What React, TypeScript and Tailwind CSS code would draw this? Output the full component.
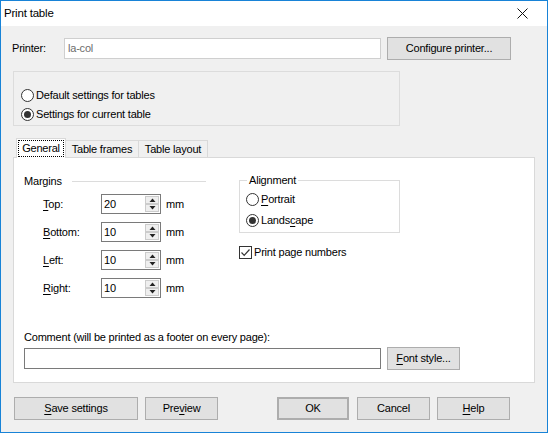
import React from 'react';

function Radio({ checked }: { checked?: boolean }) {
  return (
    <span className="w-[13px] h-[13px] rounded-full border border-[#333] bg-white flex items-center justify-center shrink-0">
      {checked && <span className="w-[7px] h-[7px] rounded-full bg-[#333]" />}
    </span>
  );
}

function Checkbox() {
  return (
    <span className="w-[13px] h-[13px] border border-[#333] bg-white flex items-center justify-center shrink-0">
      <svg width="11" height="11" viewBox="0 0 11 11" fill="none">
        <path d="M1.5 5.5 L4.2 8.3 L9.5 2.5" stroke="#333" strokeWidth="1.2" />
      </svg>
    </span>
  );
}

function Arrow({ up }: { up?: boolean }) {
  return (
    <span className="flex-1 bg-[#efefef] border border-[#cccccc] flex items-center justify-center">
      <svg width="7" height="4" viewBox="0 0 7 4">
        {up ? <path d="M0.5 4 L3.5 0.5 L6.5 4 Z" fill="#222" /> : <path d="M0.5 0 L6.5 0 L3.5 3.5 Z" fill="#222" />}
      </svg>
    </span>
  );
}

function Spin({ value }: { value: string }) {
  return (
    <div className="w-[60px] h-[20px] border border-[#7a7a7a] bg-white flex items-center">
      <span className="flex-1 pl-[2px]">{value}</span>
      <div className="flex flex-col w-[15px] h-full py-px pr-px">
        <Arrow up />
        <Arrow />
      </div>
    </div>
  );
}

function Button({ children, className = '' }: { children: React.ReactNode; className?: string }) {
  return (
    <div className={`h-[23px] bg-[#e1e1e1] border border-[#adadad] flex items-center justify-center shrink-0 ${className}`}>
      {children}
    </div>
  );
}

const rows = [
  { key: 'T', rest: 'op:', value: '20' },
  { key: 'B', rest: 'ottom:', value: '10' },
  { key: 'L', rest: 'eft:', value: '10' },
  { key: 'R', rest: 'ight:', value: '10' },
];

export default function App() {
  return (
    <div className="w-[548px] h-[433px] border border-[#1883d7] bg-[#f0f0f0] flex flex-col text-[11px] tracking-[-0.2px] text-black font-['Liberation_Sans',Arial,sans-serif] leading-none select-none">
      {/* Title bar */}
      <div className="h-[25px] bg-white flex items-center justify-between shrink-0">
        <span className="pl-[3px] text-[11.5px]">Print table</span>
        <svg className="mr-[19px]" width="11" height="11" viewBox="0 0 11 11">
          <path d="M0.5 0.5 L10.5 10.5 M10.5 0.5 L0.5 10.5" stroke="#111" strokeWidth="1" />
        </svg>
      </div>

      {/* Printer row */}
      <div className="mt-[11px] h-[23px] flex items-center pl-[11px]">
        <span className="w-[52px]">Printer:</span>
        <div className="w-[317px] h-[21px] bg-white border border-[#cfcfcf] flex items-center pl-[3px] text-[#6d6d6d]">
          la-col
        </div>
        <Button className="ml-[6px] w-[124px]">Configure printer...</Button>
      </div>

      {/* Settings scope */}
      <div className="mt-[11px] ml-[12px] w-[387px] h-[55px] border border-[#dcdcdc] pt-[14px] pl-[7px] flex flex-col">
        <label className="h-[19px] flex items-center gap-[2px]">
          <Radio />
          <span>Default settings for tables</span>
        </label>
        <label className="h-[19px] flex items-center gap-[2px]">
          <Radio checked />
          <span>Settings for current table</span>
        </label>
      </div>

      {/* Tabs */}
      <div className="mt-[12px] ml-[15px] h-[19px] flex items-end">
        <div className="relative z-10 -mb-px w-[50px] h-[20px] bg-white border-l border-t border-r border-[#d9d9d9] flex items-center justify-center">
          <span className="border border-dotted border-black px-[3px] py-[2px]">General</span>
        </div>
        <div className="w-[73px] h-[17px] border-t border-r border-[#d9d9d9] flex items-center justify-center">
          Table frames
        </div>
        <div className="w-[69px] h-[17px] border-t border-r border-[#d9d9d9] flex items-center justify-center">
          Table layout
        </div>
      </div>

      {/* Panel */}
      <div className="ml-[12px] w-[522px] h-[226px] bg-white border border-[#d9d9d9] flex flex-col">
        <div className="h-[164px] flex">
          {/* Margins */}
          <div className="ml-[10px] w-[182px] flex flex-col">
            <div className="mt-[15px] h-[16px] flex items-center">
              <span>Margins</span>
              <span className="ml-[10px] flex-1 h-px bg-[#dcdcdc]" />
            </div>
            <div className="mt-[5px] flex flex-col gap-[8px]">
              {rows.map((r) => (
                <div key={r.key} className="h-[20px] flex items-center">
                  <span className="pl-[19px] w-[77px]">
                    <span className="underline underline-offset-2">{r.key}</span>
                    {r.rest}
                  </span>
                  <Spin value={r.value} />
                  <span className="ml-[5px]">mm</span>
                </div>
              ))}
            </div>
          </div>

          {/* Alignment */}
          <div className="ml-[33px] flex flex-col">
            <div className="relative mt-[22px] w-[161px] h-[53px] border border-[#dcdcdc] pt-[8px] pl-[6px] flex flex-col">
              <span className="absolute -top-[6px] left-[7px] bg-white px-[2px]">Alignment</span>
              <label className="h-[21px] flex items-center gap-[2px]">
                <Radio />
                <span>
                  <span className="underline underline-offset-2">P</span>ortrait
                </span>
              </label>
              <label className="h-[21px] flex items-center gap-[2px]">
                <Radio checked />
                <span>
                  Lands<span className="underline underline-offset-2">c</span>ape
                </span>
              </label>
            </div>
            <label className="mt-[10px] h-[19px] flex items-center gap-[2px]">
              <Checkbox />
              <span>Print page numbers</span>
            </label>
          </div>
        </div>

        {/* Comment */}
        <div className="mt-[7px] ml-[10px] h-[16px] flex items-center">
          Comment (will be printed as a footer on every page):
        </div>
        <div className="mt-[2px] ml-[10px] h-[23px] flex items-center">
          <div className="w-[357px] h-[21px] bg-white border border-[#7a7a7a]" />
          <Button className="ml-[6px] w-[73px]">
            <span>
              <span className="underline underline-offset-2">F</span>ont style...
            </span>
          </Button>
        </div>
      </div>

      {/* Bottom buttons */}
      <div className="mt-[14px] pl-[13px] flex">
        <Button className="w-[124px]">
          <span>
            <span className="underline underline-offset-2">S</span>ave settings
          </span>
        </Button>
        <Button className="ml-[7px] w-[73px]">
          <span>
            Pre<span className="underline underline-offset-2">v</span>iew
          </span>
        </Button>
        <Button className="ml-[59px] w-[72px] border-2 border-[#0078d7]">OK</Button>
        <Button className="ml-[8px] w-[73px]">Cancel</Button>
        <Button className="ml-[7px] w-[73px]">
          <span>
            <span className="underline underline-offset-2">H</span>elp
          </span>
        </Button>
      </div>
    </div>
  );
}
